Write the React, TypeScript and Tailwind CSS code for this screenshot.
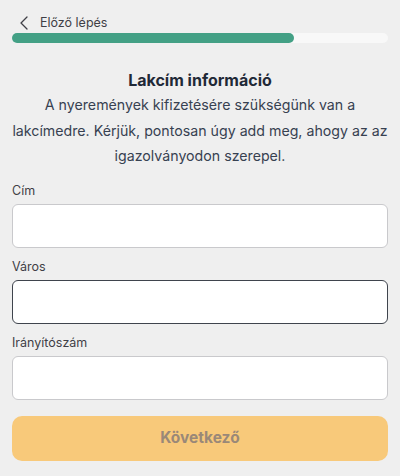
import { useState } from 'react';

function Field({ label, focused }: { label: string; focused?: boolean }) {
  const [value, setValue] = useState('');
  return (
    <div className="flex flex-col">
      <label className="text-[12.5px] leading-[20px] text-[#3f3f46]">{label}</label>
      <input
        value={value}
        onChange={(e) => setValue(e.target.value)}
        className={`mt-[3px] h-[44px] w-full rounded-[6px] bg-white px-3 text-[14px] outline-none border ${
          focused ? 'border-[#3f444d]' : 'border-[#c9c9cc]'
        }`}
      />
    </div>
  );
}

export default function App() {
  return (
    <div
      className="min-h-[476px] w-[400px] bg-[#efefef] px-[12px]"
      style={{ fontFamily: 'Inter, "Noto Sans", sans-serif' }}
    >
      {/* Back link */}
      <div className="flex h-[33px] items-center pt-[13px]">
        <button className="flex items-center gap-[11px] text-[12.5px] text-[#3f3f46]">
          <svg width="10" height="14" viewBox="0 0 10 14" className="ml-[7px]">
            <path d="M8 1 L2 7 L8 13" fill="none" stroke="#3f3f46" strokeWidth="1.3" strokeLinecap="round" strokeLinejoin="round" />
          </svg>
          <span>Előző lépés</span>
        </button>
      </div>

      {/* Progress */}
      <div className="h-[10px] w-full rounded-full bg-[#f8f8f8]">
        <div className="h-full w-[75%] rounded-full bg-[#43a085]" />
      </div>

      {/* Heading */}
      <h1 className="mt-[25px] text-center text-[16px] font-bold leading-[24px] text-[#1f2937]">
        Lakcím információ
      </h1>
      <p className="text-center text-[14.2px] leading-[25.5px] text-[#374151]">
        A nyeremények kifizetésére szükségünk van a lakcímedre. Kérjük, pontosan úgy add meg, ahogy az az igazolványodon szerepel.
      </p>

      {/* Form */}
      <div className="mt-[12px] flex flex-col gap-[9px]">
        <Field label="Cím" />
        <Field label="Város" focused />
        <Field label="Irányítószám" />
      </div>

      <button
        disabled
        className="mt-[16px] h-[45px] w-full rounded-[10px] bg-[#f8c97a] text-[15.5px] font-bold text-[#9a8878]"
      >
        Következő
      </button>
    </div>
  );
}
